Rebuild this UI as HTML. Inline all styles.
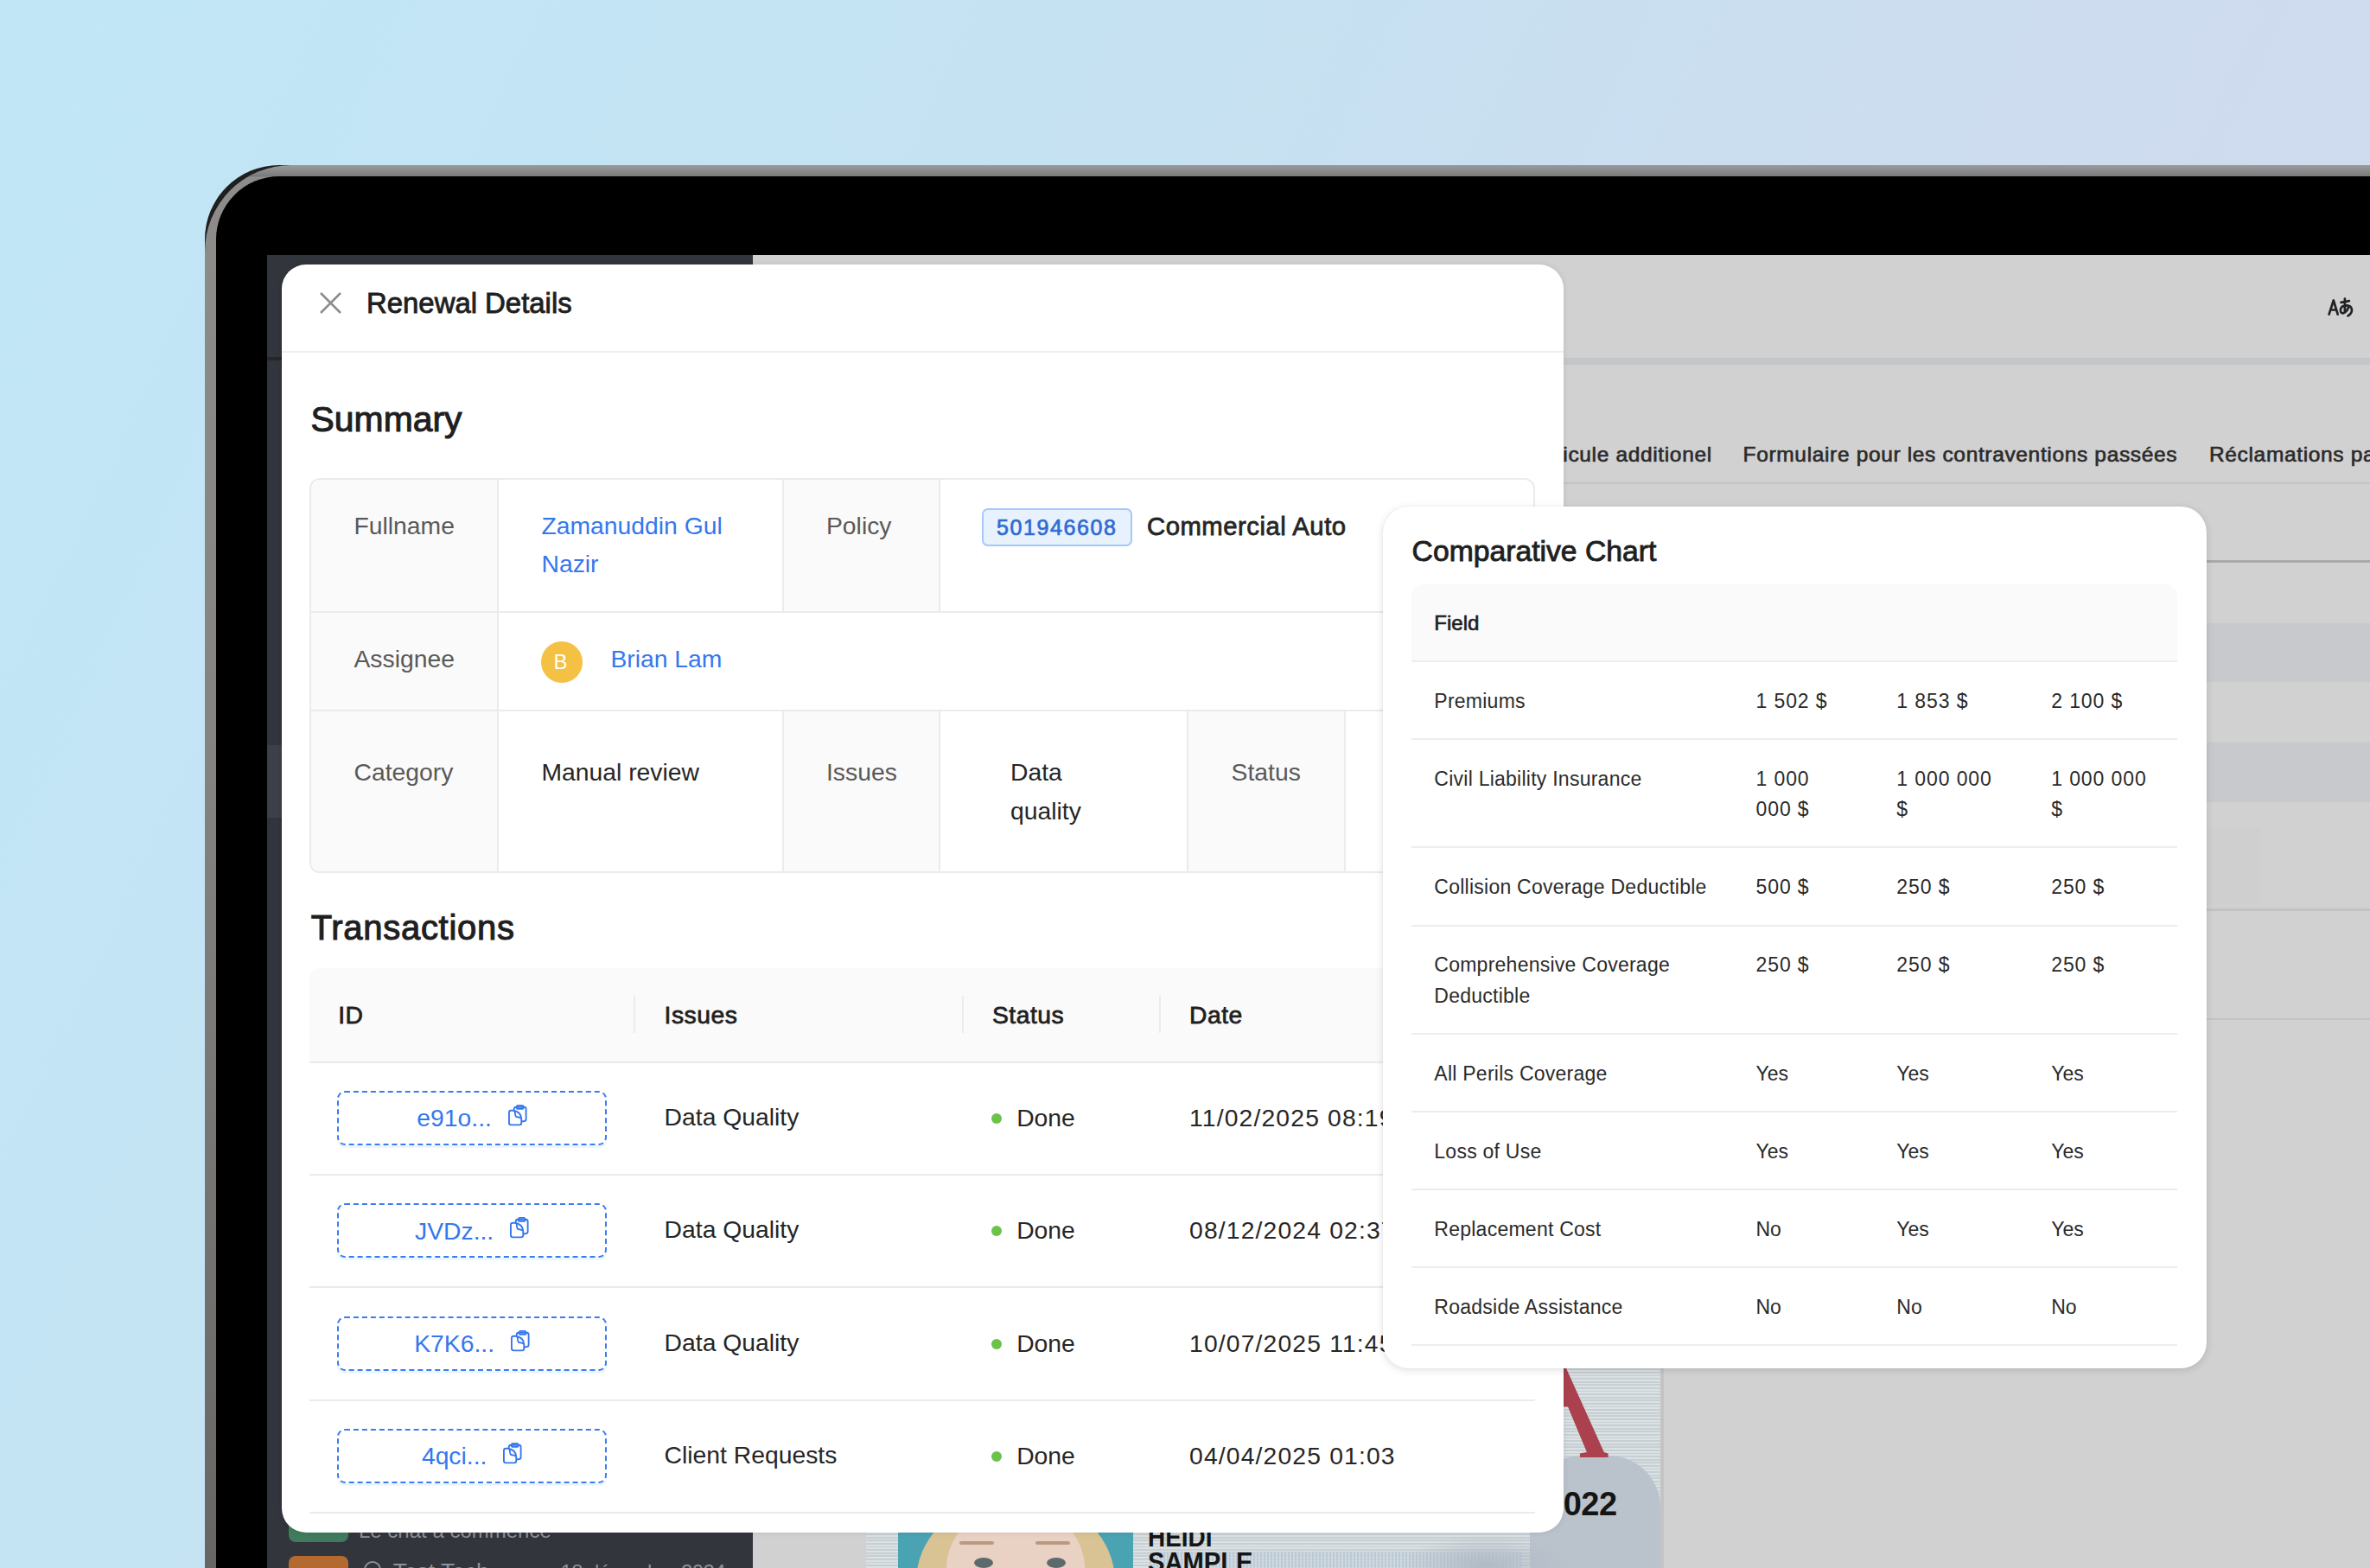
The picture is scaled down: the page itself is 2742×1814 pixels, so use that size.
<!DOCTYPE html><html><head><meta charset="utf-8"><style>*{margin:0;padding:0}
html,body{width:2742px;height:1814px;overflow:hidden}
body{position:relative;background:linear-gradient(115deg,#c1e7f7 0%,#c5e2f2 35%,#cfdbee 76%,#d2daee 100%);font-family:"Liberation Sans",sans-serif;}
.b{position:absolute}
.t{position:absolute;white-space:nowrap}
</style></head><body>
<div class="b" style="left:237px;top:191px;width:2663px;height:1809px;border-radius:86px 0 0 0;background:linear-gradient(135deg,#1e1e1e 0%,#3a3a3a 100%);"></div>
<div class="b" style="left:237px;top:191px;width:2663px;height:1809px;border-radius:100px 0 0 0;background:linear-gradient(180deg,#9b9b9b 0px,#7a7a7a 13px,#8e8b8b 14px,#858282 700px,#686565 1623px);"></div>
<div class="b" style="left:250px;top:204px;width:2650px;height:1796px;border-radius:73px 0 0 0;background:#000;"></div>
<div class="b" style="left:309px;top:295px;width:2433px;height:1519px;background:#d1d1d1;"></div>
<div class="b" style="left:309px;top:295px;width:562px;height:1519px;background:#32353c;"></div>
<div class="b" style="left:309px;top:413px;width:562px;height:4px;background:#24262b;"></div>
<div class="b" style="left:309px;top:862px;width:562px;height:84px;background:#3d4047;"></div>
<div class="b" style="left:871px;top:414px;width:1871px;height:8px;background:#c5c6c9;"></div>
<div class="t " style="left:1500.00px;top:511.41px;font-size:24.5px;line-height:29.4px;font-weight:400;color:#2b2b2b;-webkit-text-stroke:0.66px #2b2b2b;width:480.8px;text-align:right;letter-spacing:0.65px;">Véhicule additionel</div>
<div class="t " style="left:2016.60px;top:511.41px;font-size:24.5px;line-height:29.4px;font-weight:400;color:#2b2b2b;-webkit-text-stroke:0.66px #2b2b2b;letter-spacing:0.65px;">Formulaire pour les contraventions passées</div>
<div class="t " style="left:2556.00px;top:511.41px;font-size:24.5px;line-height:29.4px;font-weight:400;color:#2b2b2b;-webkit-text-stroke:0.66px #2b2b2b;letter-spacing:0.65px;">Réclamations passées</div>
<div class="b" style="left:871px;top:558px;width:1871px;height:2px;background:#c4c4c4;"></div>
<div class="b" style="left:1800px;top:648px;width:942px;height:3px;background:#a9a9a9;"></div>
<div class="b" style="left:1800px;top:721px;width:942px;height:68px;background:#c8c9cc;"></div>
<div class="b" style="left:1800px;top:859px;width:942px;height:69px;background:#c8c9cc;"></div>
<div class="b" style="left:2553px;top:957px;width:62px;height:88px;background:#cfcfd0;"></div>
<div class="b" style="left:1800px;top:1051px;width:942px;height:3px;background:#c1c2c4;"></div>
<div class="b" style="left:1800px;top:1178px;width:942px;height:2px;background:#c3c3c4;"></div>
<svg class="b" style="left:2690px;top:342px" width="36" height="27" viewBox="0 0 36 27">
<g fill="none" stroke="#222428" stroke-width="2.7" stroke-linecap="round" stroke-linejoin="round">
<path d="M4.6 21.6 L9.8 5.5 L14.7 21.6 M6.6 16.5 H12.8"/>
<path d="M18.4 7.9 Q23 7.2 27.9 6.1 M22.9 3.5 V18.3 M27 13.8 Q25 19.5 20.8 20.3 Q17.8 20.5 17.9 16.5 Q18.5 12 23 11.5 Q30.8 11 31 16.4 Q31 20.5 26.5 23.4"/>
</g></svg>
<div class="b" style="left:1002px;top:1560px;width:919px;height:254px;background:repeating-linear-gradient(180deg,#dce1e3 0px,#dce1e3 1.8px,#c6cfd3 1.8px,#c6cfd3 3.6px);"></div>
<div class="b" style="left:1921px;top:1560px;width:4px;height:254px;background:#c4c4c4;"></div>
<div class="b" style="left:1770px;top:1684px;width:151px;height:130px;border-radius:60px 60px 0 0;background:#bac3cc;"></div>
<div class="b" style="left:1330px;top:1795px;width:430px;height:19px;background:repeating-linear-gradient(90deg,#b7c7d6 0px,#b7c7d6 2px,#cfd8de 2px,#cfd8de 4px);opacity:.8;"></div>
<div class="b" style="left:1620px;top:1775px;width:200px;height:60px;background:radial-gradient(ellipse at 50% 60%,#b0bac5 0%,rgba(190,199,208,0) 70%);"></div>
<div class="b" style="left:1039px;top:1700px;width:272px;height:114px;background:#4aa3b3;"></div>
<div class="b" style="left:1060px;top:1740px;width:230px;height:120px;border-radius:90px 90px 0 0;background:#d9c394;"></div>
<div class="b" style="left:1095px;top:1745px;width:160px;height:110px;border-radius:70px 70px 0 0;background:#e9d2c3;"></div>
<div class="b" style="left:1127px;top:1802px;width:22px;height:12px;border-radius:50%;background:#5d6a6c;"></div>
<div class="b" style="left:1211px;top:1802px;width:22px;height:12px;border-radius:50%;background:#5d6a6c;"></div>
<div class="b" style="left:1110px;top:1783px;width:40px;height:4px;border-radius:3px;background:#b89a80;"></div>
<div class="b" style="left:1198px;top:1783px;width:40px;height:4px;border-radius:3px;background:#b89a80;"></div>
<div class="t " style="left:1328.00px;top:1759.66px;font-size:31px;line-height:37.2px;font-weight:700;color:#151515;transform:scaleX(0.9);transform-origin:0 0;">HEIDI</div>
<div class="t " style="left:1328.00px;top:1788.66px;font-size:31px;line-height:37.2px;font-weight:700;color:#151515;transform:scaleX(0.94);transform-origin:0 0;">SAMPLE</div>
<div class="t " style="left:1788.00px;top:1718.43px;font-size:38px;line-height:45.6px;font-weight:700;color:#151515;letter-spacing:-0.5px;">2022</div>
<svg class="b" style="left:1780px;top:1560px" width="90" height="140"><path d="M20 0 L21.7 0 L75.8 120 L80.6 121.5 L80.6 126 L47.9 126 L47.9 121.5 L55.9 120 L34 67.6 L20 67.6 Z" fill="#ab414f"/></svg>
<div class="b" style="left:334px;top:1700px;width:69px;height:84px;background:#3f7b5c;border-radius:8px;"></div>
<div class="t " style="left:415.00px;top:1757.28px;font-size:24px;line-height:28.8px;font-weight:400;color:#8f9196;">Le chat a commencé</div>
<div class="b" style="left:334px;top:1800px;width:69px;height:100px;background:#b3692f;border-radius:8px;"></div>
<div class="t " style="left:454.70px;top:1803.01px;font-size:26.4px;line-height:31.68px;font-weight:400;color:#8f9196;">Test Tech</div>
<div class="t " style="left:648.50px;top:1805.28px;font-size:24px;line-height:28.8px;font-weight:400;color:#8f9196;letter-spacing:-0.6px;">18 décembre 2024</div>
<div class="b" style="left:421px;top:1806px;width:16px;height:16px;border:2.5px solid #8f9196;border-radius:50%;"></div>
<div class="b" style="left:326px;top:306px;width:1483px;height:1467px;background:#fff;border-radius:28px;box-shadow:0 0 6px rgba(0,0,0,0.10);"></div>
<svg class="b" style="left:368px;top:336px" width="29" height="29" viewBox="0 0 29 29"><path d="M3 3 L26 26 M26 3 L3 26" stroke="#8c8c8c" stroke-width="2.5" stroke-linecap="butt"/></svg>
<div class="t " style="left:424.00px;top:331.16px;font-size:32.9px;line-height:39.48px;font-weight:400;color:#1f1f1f;-webkit-text-stroke:0.89px #1f1f1f;">Renewal Details</div>
<div class="b" style="left:326px;top:406px;width:1483px;height:2px;background:#efefef;"></div>
<div class="t " style="left:359.60px;top:460.69px;font-size:40.9px;line-height:49.08px;font-weight:400;color:#1f1f1f;-webkit-text-stroke:1.1px #1f1f1f;">Summary</div>
<div class="b" style="left:358px;top:553px;width:1418px;height:457px;border:2px solid #ebebeb;border-radius:12px;box-sizing:border-box;"></div>
<div class="b" style="left:360px;top:555px;width:215px;height:453px;background:#fafafa;border-radius:10px 0 0 10px;"></div>
<div class="b" style="left:907px;top:555px;width:179px;height:152px;background:#fafafa;"></div>
<div class="b" style="left:907px;top:823px;width:179px;height:185px;background:#fafafa;"></div>
<div class="b" style="left:1375px;top:823px;width:180px;height:185px;background:#fafafa;"></div>
<div class="b" style="left:360px;top:707px;width:1414px;height:2px;background:#ebebeb;"></div>
<div class="b" style="left:360px;top:821px;width:1414px;height:2px;background:#ebebeb;"></div>
<div class="b" style="left:575px;top:555px;width:2px;height:453px;background:#ebebeb;"></div>
<div class="b" style="left:905px;top:555px;width:2px;height:152px;background:#ebebeb;"></div>
<div class="b" style="left:1086px;top:555px;width:2px;height:152px;background:#ebebeb;"></div>
<div class="b" style="left:905px;top:823px;width:2px;height:185px;background:#ebebeb;"></div>
<div class="b" style="left:1086px;top:823px;width:2px;height:185px;background:#ebebeb;"></div>
<div class="b" style="left:1373px;top:823px;width:2px;height:185px;background:#ebebeb;"></div>
<div class="b" style="left:1555px;top:823px;width:2px;height:185px;background:#ebebeb;"></div>
<div class="t " style="left:409.50px;top:592.21px;font-size:28.3px;line-height:33.96px;font-weight:400;color:#595959;">Fullname</div>
<div class="t " style="left:626.50px;top:592.21px;font-size:28.3px;line-height:33.96px;font-weight:400;color:#3577ee;">Zamanuddin Gul</div>
<div class="t " style="left:626.50px;top:636.21px;font-size:28.3px;line-height:33.96px;font-weight:400;color:#3577ee;">Nazir</div>
<div class="t " style="left:956.00px;top:592.21px;font-size:28.3px;line-height:33.96px;font-weight:400;color:#595959;">Policy</div>
<div class="b" style="left:1136px;top:588px;width:173.5px;height:43.5px;background:#e8f1fe;border:2px solid #a6c8f6;border-radius:7px;box-sizing:border-box;"></div>
<div class="t " style="left:1152.90px;top:595.44px;font-size:25px;line-height:30.0px;font-weight:400;color:#2e6bd3;-webkit-text-stroke:0.68px #2e6bd3;letter-spacing:1.6px;">501946608</div>
<div class="t " style="left:1327.00px;top:591.27px;font-size:29.3px;line-height:35.16px;font-weight:400;color:#262626;-webkit-text-stroke:0.79px #262626;letter-spacing:0.5px;">Commercial Auto</div>
<div class="t " style="left:409.50px;top:746.21px;font-size:28.3px;line-height:33.96px;font-weight:400;color:#595959;">Assignee</div>
<div class="b" style="left:625.6px;top:742px;width:48.0px;height:48px;background:#f4c144;border-radius:50%;"></div>
<div class="t " style="left:640.50px;top:752.28px;font-size:24px;line-height:28.8px;font-weight:400;color:#fff;">B</div>
<div class="t " style="left:706.40px;top:746.21px;font-size:28.3px;line-height:33.96px;font-weight:400;color:#3577ee;">Brian Lam</div>
<div class="t " style="left:409.50px;top:877.21px;font-size:28.3px;line-height:33.96px;font-weight:400;color:#595959;">Category</div>
<div class="t " style="left:626.50px;top:877.21px;font-size:28.3px;line-height:33.96px;font-weight:400;color:#262626;">Manual review</div>
<div class="t " style="left:956.00px;top:877.21px;font-size:28.3px;line-height:33.96px;font-weight:400;color:#595959;">Issues</div>
<div class="t " style="left:1169.00px;top:877.21px;font-size:28.3px;line-height:33.96px;font-weight:400;color:#262626;">Data</div>
<div class="t " style="left:1169.00px;top:921.81px;font-size:28.3px;line-height:33.96px;font-weight:400;color:#262626;">quality</div>
<div class="t " style="left:1424.60px;top:877.21px;font-size:28.3px;line-height:33.96px;font-weight:400;color:#595959;">Status</div>
<div class="t " style="left:359.70px;top:1048.54px;font-size:40px;line-height:48.0px;font-weight:400;color:#1f1f1f;-webkit-text-stroke:1.08px #1f1f1f;letter-spacing:0.7px;">Transactions</div>
<div class="b" style="left:358px;top:1119.5px;width:1418px;height:109.5px;background:#fafafa;border-radius:12px 12px 0 0;"></div>
<div class="b" style="left:358px;top:1228px;width:1418px;height:2px;background:#ebebeb;"></div>
<div class="b" style="left:733px;top:1152px;width:2px;height:43px;background:#ececec;"></div>
<div class="b" style="left:1113px;top:1152px;width:2px;height:43px;background:#ececec;"></div>
<div class="b" style="left:1341px;top:1152px;width:2px;height:43px;background:#ececec;"></div>
<div class="t " style="left:391.20px;top:1157.61px;font-size:28.3px;line-height:33.96px;font-weight:400;color:#1f1f1f;-webkit-text-stroke:0.76px #1f1f1f;letter-spacing:0.5px;">ID</div>
<div class="t " style="left:768.60px;top:1157.61px;font-size:28.3px;line-height:33.96px;font-weight:400;color:#1f1f1f;-webkit-text-stroke:0.76px #1f1f1f;letter-spacing:0.5px;">Issues</div>
<div class="t " style="left:1148.00px;top:1157.61px;font-size:28.3px;line-height:33.96px;font-weight:400;color:#1f1f1f;-webkit-text-stroke:0.76px #1f1f1f;letter-spacing:0.5px;">Status</div>
<div class="t " style="left:1376.00px;top:1157.61px;font-size:28.3px;line-height:33.96px;font-weight:400;color:#1f1f1f;-webkit-text-stroke:0.76px #1f1f1f;letter-spacing:0.5px;">Date</div>
<div class="b" style="left:390.3px;top:1261.8px;width:312.2px;height:63.0px;border:2px dashed #3b7cf0;border-radius:9px;box-sizing:border-box;box-shadow:0 3px 0 rgba(5,145,255,0.08);"></div>
<div class="b" style="left:390.3px;top:1261.8px;width:312.2px;height:63px;display:flex;align-items:center;justify-content:center;"><span style="font-size:28.3px;color:#3577ee;line-height:30px;margin-top:0px">e91o...</span><svg style="margin-left:19px;margin-top:-5px" width="22.5" height="25.3" viewBox="0 0 24 27"><g fill="none" stroke="#3577ee" stroke-width="2" stroke-linejoin="round"><path d="M7.2 7.5 V5.5 Q7.2 3 9.7 3 H19.5 Q22 3 22 5.5 V18 Q22 20.5 19.5 20.5 H16.5"/><rect x="10.3" y="1" width="8.5" height="4.2" rx="2.1"/><path d="M1 9.7 Q1 7.2 3.5 7.2 H6 Q15.8 8.5 16.3 17.5 V22.5 Q16.3 25 13.8 25 H3.5 Q1 25 1 22.5 Z"/><path d="M8.2 7.6 Q8.5 14.5 10 15 Q14 15.2 16 17"/></g></svg></div>
<div class="t " style="left:768.60px;top:1276.01px;font-size:28.3px;line-height:33.96px;font-weight:400;color:#262626;">Data Quality</div>
<div class="b" style="left:1147px;top:1287.8px;width:12px;height:12.0px;background:#6cc24a;border-radius:50%;"></div>
<div class="t " style="left:1176.20px;top:1277.01px;font-size:28.3px;line-height:33.96px;font-weight:400;color:#262626;">Done</div>
<div class="t " style="left:1376.00px;top:1277.01px;font-size:28.3px;line-height:33.96px;font-weight:400;color:#262626;letter-spacing:1.15px;">11/02/2025 08:19</div>
<div class="b" style="left:358px;top:1357.8px;width:1418px;height:2.0px;background:#ebebeb;"></div>
<div class="b" style="left:390.3px;top:1392.1px;width:312.2px;height:63.0px;border:2px dashed #3b7cf0;border-radius:9px;box-sizing:border-box;box-shadow:0 3px 0 rgba(5,145,255,0.08);"></div>
<div class="b" style="left:390.3px;top:1392.1px;width:312.2px;height:63px;display:flex;align-items:center;justify-content:center;"><span style="font-size:28.3px;color:#3577ee;line-height:30px;margin-top:0px">JVDz...</span><svg style="margin-left:19px;margin-top:-5px" width="22.5" height="25.3" viewBox="0 0 24 27"><g fill="none" stroke="#3577ee" stroke-width="2" stroke-linejoin="round"><path d="M7.2 7.5 V5.5 Q7.2 3 9.7 3 H19.5 Q22 3 22 5.5 V18 Q22 20.5 19.5 20.5 H16.5"/><rect x="10.3" y="1" width="8.5" height="4.2" rx="2.1"/><path d="M1 9.7 Q1 7.2 3.5 7.2 H6 Q15.8 8.5 16.3 17.5 V22.5 Q16.3 25 13.8 25 H3.5 Q1 25 1 22.5 Z"/><path d="M8.2 7.6 Q8.5 14.5 10 15 Q14 15.2 16 17"/></g></svg></div>
<div class="t " style="left:768.60px;top:1406.36px;font-size:28.3px;line-height:33.96px;font-weight:400;color:#262626;">Data Quality</div>
<div class="b" style="left:1147px;top:1418.1px;width:12px;height:12.0px;background:#6cc24a;border-radius:50%;"></div>
<div class="t " style="left:1176.20px;top:1407.36px;font-size:28.3px;line-height:33.96px;font-weight:400;color:#262626;">Done</div>
<div class="t " style="left:1376.00px;top:1407.36px;font-size:28.3px;line-height:33.96px;font-weight:400;color:#262626;letter-spacing:1.15px;">08/12/2024 02:37</div>
<div class="b" style="left:358px;top:1488.1px;width:1418px;height:2.0px;background:#ebebeb;"></div>
<div class="b" style="left:390.3px;top:1522.5px;width:312.2px;height:63.0px;border:2px dashed #3b7cf0;border-radius:9px;box-sizing:border-box;box-shadow:0 3px 0 rgba(5,145,255,0.08);"></div>
<div class="b" style="left:390.3px;top:1522.5px;width:312.2px;height:63px;display:flex;align-items:center;justify-content:center;"><span style="font-size:28.3px;color:#3577ee;line-height:30px;margin-top:0px">K7K6...</span><svg style="margin-left:19px;margin-top:-5px" width="22.5" height="25.3" viewBox="0 0 24 27"><g fill="none" stroke="#3577ee" stroke-width="2" stroke-linejoin="round"><path d="M7.2 7.5 V5.5 Q7.2 3 9.7 3 H19.5 Q22 3 22 5.5 V18 Q22 20.5 19.5 20.5 H16.5"/><rect x="10.3" y="1" width="8.5" height="4.2" rx="2.1"/><path d="M1 9.7 Q1 7.2 3.5 7.2 H6 Q15.8 8.5 16.3 17.5 V22.5 Q16.3 25 13.8 25 H3.5 Q1 25 1 22.5 Z"/><path d="M8.2 7.6 Q8.5 14.5 10 15 Q14 15.2 16 17"/></g></svg></div>
<div class="t " style="left:768.60px;top:1536.71px;font-size:28.3px;line-height:33.96px;font-weight:400;color:#262626;">Data Quality</div>
<div class="b" style="left:1147px;top:1548.5px;width:12px;height:12.0px;background:#6cc24a;border-radius:50%;"></div>
<div class="t " style="left:1176.20px;top:1537.71px;font-size:28.3px;line-height:33.96px;font-weight:400;color:#262626;">Done</div>
<div class="t " style="left:1376.00px;top:1537.71px;font-size:28.3px;line-height:33.96px;font-weight:400;color:#262626;letter-spacing:1.15px;">10/07/2025 11:45</div>
<div class="b" style="left:358px;top:1618.5px;width:1418px;height:2.0px;background:#ebebeb;"></div>
<div class="b" style="left:390.3px;top:1652.8px;width:312.2px;height:63.0px;border:2px dashed #3b7cf0;border-radius:9px;box-sizing:border-box;box-shadow:0 3px 0 rgba(5,145,255,0.08);"></div>
<div class="b" style="left:390.3px;top:1652.8px;width:312.2px;height:63px;display:flex;align-items:center;justify-content:center;"><span style="font-size:28.3px;color:#3577ee;line-height:30px;margin-top:0px">4qci...</span><svg style="margin-left:19px;margin-top:-5px" width="22.5" height="25.3" viewBox="0 0 24 27"><g fill="none" stroke="#3577ee" stroke-width="2" stroke-linejoin="round"><path d="M7.2 7.5 V5.5 Q7.2 3 9.7 3 H19.5 Q22 3 22 5.5 V18 Q22 20.5 19.5 20.5 H16.5"/><rect x="10.3" y="1" width="8.5" height="4.2" rx="2.1"/><path d="M1 9.7 Q1 7.2 3.5 7.2 H6 Q15.8 8.5 16.3 17.5 V22.5 Q16.3 25 13.8 25 H3.5 Q1 25 1 22.5 Z"/><path d="M8.2 7.6 Q8.5 14.5 10 15 Q14 15.2 16 17"/></g></svg></div>
<div class="t " style="left:768.60px;top:1667.06px;font-size:28.3px;line-height:33.96px;font-weight:400;color:#262626;">Client Requests</div>
<div class="b" style="left:1147px;top:1678.8px;width:12px;height:12.0px;background:#6cc24a;border-radius:50%;"></div>
<div class="t " style="left:1176.20px;top:1668.06px;font-size:28.3px;line-height:33.96px;font-weight:400;color:#262626;">Done</div>
<div class="t " style="left:1376.00px;top:1668.06px;font-size:28.3px;line-height:33.96px;font-weight:400;color:#262626;letter-spacing:1.15px;">04/04/2025 01:03</div>
<div class="b" style="left:358px;top:1748.8px;width:1418px;height:2.0px;background:#ebebeb;"></div>
<div class="b" style="left:1600px;top:586px;width:953px;height:997px;background:#fff;border-radius:30px;box-shadow:0 2px 10px rgba(0,0,0,0.13),0 0 2px rgba(0,0,0,0.06);"></div>
<div class="t " style="left:1633.60px;top:617.40px;font-size:33.7px;line-height:40.44px;font-weight:400;color:#1f1f1f;-webkit-text-stroke:0.91px #1f1f1f;">Comparative Chart</div>
<div class="b" style="left:1633px;top:676px;width:886px;height:89px;background:#fafafa;border-radius:14px 14px 0 0;"></div>
<div class="t " style="left:1659.30px;top:706.69px;font-size:24.1px;line-height:28.92px;font-weight:400;color:#1f1f1f;-webkit-text-stroke:0.65px #1f1f1f;">Field</div>
<div class="b" style="left:1633px;top:764px;width:886px;height:2px;background:#ededed;"></div>
<div class="b" style="left:1633px;top:853.8px;width:886px;height:2.0px;background:#ededed;"></div>
<div class="b" style="left:1633px;top:979.3px;width:886px;height:2.0px;background:#ededed;"></div>
<div class="b" style="left:1633px;top:1069.5px;width:886px;height:2.0px;background:#ededed;"></div>
<div class="b" style="left:1633px;top:1195.3px;width:886px;height:2.0px;background:#ededed;"></div>
<div class="b" style="left:1633px;top:1285.2px;width:886px;height:2.0px;background:#ededed;"></div>
<div class="b" style="left:1633px;top:1375px;width:886px;height:2px;background:#ededed;"></div>
<div class="b" style="left:1633px;top:1465.3px;width:886px;height:2.0px;background:#ededed;"></div>
<div class="b" style="left:1633px;top:1555.2px;width:886px;height:2.0px;background:#ededed;"></div>
<div class="t " style="left:1659.30px;top:797.73px;font-size:23px;line-height:27.6px;font-weight:400;color:#2b2b2b;letter-spacing:0.25px;">Premiums</div>
<div class="t " style="left:2031.50px;top:797.73px;font-size:23px;line-height:27.6px;font-weight:400;color:#2b2b2b;letter-spacing:0.9px;">1 502 $</div>
<div class="t " style="left:2194.30px;top:797.73px;font-size:23px;line-height:27.6px;font-weight:400;color:#2b2b2b;letter-spacing:0.9px;">1 853 $</div>
<div class="t " style="left:2373.20px;top:797.73px;font-size:23px;line-height:27.6px;font-weight:400;color:#2b2b2b;letter-spacing:0.9px;">2 100 $</div>
<div class="t " style="left:1659.30px;top:887.53px;font-size:23px;line-height:27.6px;font-weight:400;color:#2b2b2b;letter-spacing:0.25px;">Civil Liability Insurance</div>
<div class="t " style="left:2031.50px;top:887.53px;font-size:23px;line-height:27.6px;font-weight:400;color:#2b2b2b;letter-spacing:0.9px;">1 000</div>
<div class="t " style="left:2031.50px;top:923.43px;font-size:23px;line-height:27.6px;font-weight:400;color:#2b2b2b;letter-spacing:0.9px;">000 $</div>
<div class="t " style="left:2194.30px;top:887.53px;font-size:23px;line-height:27.6px;font-weight:400;color:#2b2b2b;letter-spacing:0.9px;">1 000 000</div>
<div class="t " style="left:2194.30px;top:923.43px;font-size:23px;line-height:27.6px;font-weight:400;color:#2b2b2b;">$</div>
<div class="t " style="left:2373.20px;top:887.53px;font-size:23px;line-height:27.6px;font-weight:400;color:#2b2b2b;letter-spacing:0.9px;">1 000 000</div>
<div class="t " style="left:2373.20px;top:923.43px;font-size:23px;line-height:27.6px;font-weight:400;color:#2b2b2b;">$</div>
<div class="t " style="left:1659.30px;top:1013.03px;font-size:23px;line-height:27.6px;font-weight:400;color:#2b2b2b;letter-spacing:0.25px;">Collision Coverage Deductible</div>
<div class="t " style="left:2031.50px;top:1013.03px;font-size:23px;line-height:27.6px;font-weight:400;color:#2b2b2b;letter-spacing:0.9px;">500 $</div>
<div class="t " style="left:2194.30px;top:1013.03px;font-size:23px;line-height:27.6px;font-weight:400;color:#2b2b2b;letter-spacing:0.9px;">250 $</div>
<div class="t " style="left:2373.20px;top:1013.03px;font-size:23px;line-height:27.6px;font-weight:400;color:#2b2b2b;letter-spacing:0.9px;">250 $</div>
<div class="t " style="left:1659.30px;top:1103.23px;font-size:23px;line-height:27.6px;font-weight:400;color:#2b2b2b;letter-spacing:0.25px;">Comprehensive Coverage</div>
<div class="t " style="left:1659.30px;top:1139.13px;font-size:23px;line-height:27.6px;font-weight:400;color:#2b2b2b;letter-spacing:0.25px;">Deductible</div>
<div class="t " style="left:2031.50px;top:1103.23px;font-size:23px;line-height:27.6px;font-weight:400;color:#2b2b2b;letter-spacing:0.9px;">250 $</div>
<div class="t " style="left:2194.30px;top:1103.23px;font-size:23px;line-height:27.6px;font-weight:400;color:#2b2b2b;letter-spacing:0.9px;">250 $</div>
<div class="t " style="left:2373.20px;top:1103.23px;font-size:23px;line-height:27.6px;font-weight:400;color:#2b2b2b;letter-spacing:0.9px;">250 $</div>
<div class="t " style="left:1659.30px;top:1229.03px;font-size:23px;line-height:27.6px;font-weight:400;color:#2b2b2b;letter-spacing:0.25px;">All Perils Coverage</div>
<div class="t " style="left:2031.50px;top:1229.03px;font-size:23px;line-height:27.6px;font-weight:400;color:#2b2b2b;">Yes</div>
<div class="t " style="left:2194.30px;top:1229.03px;font-size:23px;line-height:27.6px;font-weight:400;color:#2b2b2b;">Yes</div>
<div class="t " style="left:2373.20px;top:1229.03px;font-size:23px;line-height:27.6px;font-weight:400;color:#2b2b2b;">Yes</div>
<div class="t " style="left:1659.30px;top:1318.93px;font-size:23px;line-height:27.6px;font-weight:400;color:#2b2b2b;letter-spacing:0.25px;">Loss of Use</div>
<div class="t " style="left:2031.50px;top:1318.93px;font-size:23px;line-height:27.6px;font-weight:400;color:#2b2b2b;">Yes</div>
<div class="t " style="left:2194.30px;top:1318.93px;font-size:23px;line-height:27.6px;font-weight:400;color:#2b2b2b;">Yes</div>
<div class="t " style="left:2373.20px;top:1318.93px;font-size:23px;line-height:27.6px;font-weight:400;color:#2b2b2b;">Yes</div>
<div class="t " style="left:1659.30px;top:1408.73px;font-size:23px;line-height:27.6px;font-weight:400;color:#2b2b2b;letter-spacing:0.25px;">Replacement Cost</div>
<div class="t " style="left:2031.50px;top:1408.73px;font-size:23px;line-height:27.6px;font-weight:400;color:#2b2b2b;">No</div>
<div class="t " style="left:2194.30px;top:1408.73px;font-size:23px;line-height:27.6px;font-weight:400;color:#2b2b2b;">Yes</div>
<div class="t " style="left:2373.20px;top:1408.73px;font-size:23px;line-height:27.6px;font-weight:400;color:#2b2b2b;">Yes</div>
<div class="t " style="left:1659.30px;top:1499.03px;font-size:23px;line-height:27.6px;font-weight:400;color:#2b2b2b;letter-spacing:0.25px;">Roadside Assistance</div>
<div class="t " style="left:2031.50px;top:1499.03px;font-size:23px;line-height:27.6px;font-weight:400;color:#2b2b2b;">No</div>
<div class="t " style="left:2194.30px;top:1499.03px;font-size:23px;line-height:27.6px;font-weight:400;color:#2b2b2b;">No</div>
<div class="t " style="left:2373.20px;top:1499.03px;font-size:23px;line-height:27.6px;font-weight:400;color:#2b2b2b;">No</div>
</body></html>
